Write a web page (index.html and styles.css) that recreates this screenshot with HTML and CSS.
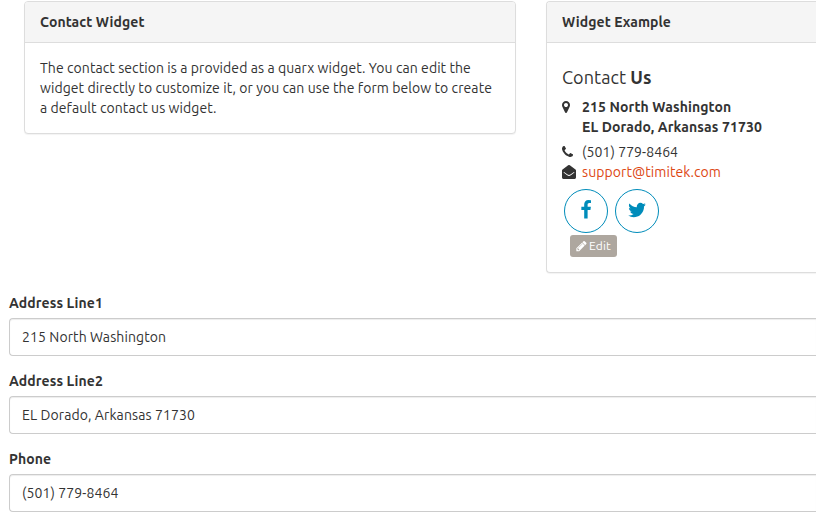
FILE: index.html
```html
<!DOCTYPE html>
<html lang="en">
<head>
<meta charset="utf-8">
<title>Contact Widget</title>
<link rel="stylesheet" href="styles.css">
</head>
<body>
<div class="row">
  <section class="panel panel-info">
    <h3 class="panel-heading">Contact Widget</h3>
    <div class="panel-body">
      <p>The contact section is a provided as a quarx widget. You can edit the<br>widget directly to customize it, or you can use the form below to create<br>a default contact us widget.</p>
    </div>
  </section>
  <section class="panel panel-example">
    <h3 class="panel-heading">Widget Example</h3>
    <div class="panel-body">
      <h4 class="contact-title">Contact <strong>Us</strong></h4>
      <ul class="contact-list">
        <li class="address">
          <svg class="icon" viewBox="384 0 1792 1792"><path d="M1152 640q0-106-75-181t-181-75-181 75-75 181 75 181 181 75 181-75 75-181zm256 0q0 109-33 179l-364 774q-16 33-47.5 52t-67.5 19-67.5-19-46.5-52l-365-774q-33-70-33-179 0-212 150-362t362-150 362 150 150 362z"/></svg>
          <strong>215 North Washington<br>EL Dorado, Arkansas 71730</strong>
        </li>
        <li>
          <svg class="icon" viewBox="192 0 1792 1792"><path d="M1600 1240q0 27-10 70.5t-21 68.5q-21 50-122 106-94 51-186 51-27 0-52.5-3.5t-57.5-12.5-47.5-14.5-55.5-20.5-49-18q-98-35-175-83-128-79-264.5-215.5t-215.5-264.5q-48-77-83-175-3-9-18-49t-20.5-55.5-14.5-47.5-12.5-57.5-3.5-52.5q0-92 51-186 56-101 106-122 25-11 68.5-21t70.5-10q14 0 21 3 18 6 53 76 11 19 30 54t35 63.5 31 53.5q3 4 17.5 25t21.5 35.5 7 28.5q0 20-28.5 50t-62 55-62 53-28.5 46q0 9 5 22.5t8.5 20.5 14 24 11.5 19q76 137 174 235t235 174q2 1 19 11.5t24 14 20.5 8.5 22.5 5q18 0 46-28.5t53-62 55-62 50-28.5q14 0 28.5 7t35.5 21.5 25 17.5q25 15 53.5 31t63.5 35 54 30q70 35 76 53 3 7 3 21z"/></svg>
          <span>(501) 779-8464</span>
        </li>
        <li>
          <svg class="icon icon-mail" viewBox="0 0 14 14"><path fill-rule="evenodd" d="M7 0C7.6 0 8.2 .5 8.8 .9L13.5 4.4Q14 4.8 14 5.4V12.6Q14 14 12.7 14H1.3Q0 14 0 12.6V5.4Q0 4.8 .5 4.4L5.2 .9C5.8 .5 6.4 0 7 0zM2 7L1.5 7.6L5.2 10.3Q7 11.6 8.8 10.3L12.5 7.6L12 7L8.4 9.5Q7 10.4 5.6 9.5z"/></svg>
          <a href="#">support@timitek.com</a>
        </li>
      </ul>
      <div class="social">
        <a href="#" aria-label="Facebook"><svg viewBox="0 0 1792 1792"><path d="M1343 12v264h-157q-86 0-116 36t-30 108v189h293l-39 296h-254v759h-306v-759h-255v-296h255v-218q0-186 104-288.5t277-102.5q147 0 228 12z"/></svg></a>
        <a href="#" aria-label="Twitter"><svg viewBox="0 0 1792 1792"><path d="M1684 408q-67 98-162 167 1 14 1 42 0 130-38 259.5t-115.5 248.5-184.5 210.5-258 146-323 54.5q-271 0-496-145 35 4 78 4 225 0 401-138-105-2-188-64.5t-114-159.5q33 5 61 5 43 0 85-11-112-23-185.5-111.5t-73.5-205.5v-4q68 38 146 41-66-44-105-115t-39-154q0-88 44-163 121 149 294.5 238.5t371.5 99.5q-8-38-8-74 0-134 94.5-228.5t228.5-94.5q140 0 236 102 109-21 205-78-37 115-142 178 93-10 186-50z"/></svg></a>
      </div>
      <a class="edit" href="#"><svg viewBox="128 0 1536 1792"><path d="M491 1536l91-91-235-235-91 91v107h128v128h107zm523-928q0-22-22-22-10 0-17 7l-542 542q-7 7-7 17 0 22 22 22 10 0 17-7l542-542q7-7 7-17zm-54-192l416 416-832 832h-416v-416zm683 96q0 53-37 90l-166 166-416-416 166-165q36-38 90-38 53 0 91 38l235 234q37 39 37 91z"/></svg><span>Edit</span></a>
    </div>
  </section>
</div>
<form class="form">
  <div class="group"><label for="address1">Address Line1</label><input id="address1" value="215 North Washington"></div>
  <div class="group"><label for="address2">Address Line2</label><input id="address2" value="EL Dorado, Arkansas 71730"></div>
  <div class="group"><label for="phone">Phone</label><input id="phone" value="(501) 779-8464"></div>
</form>
</body>
</html>
```
FILE: styles.css
```css
* { box-sizing: border-box; }
body {
  margin: 0;
  padding-top: 1px;
  overflow: hidden;
  background: #fff;
  color: #333;
  font: 14px/20px Ubuntu, "Noto Sans", sans-serif;
  letter-spacing: .075px;
}
a { color: #dd4814; text-decoration: none; }
h3, h4, p, ul { margin: 0; padding: 0; }
.row { display: flex; align-items: flex-start; gap: 30px; padding-left: 24px; }
.panel {
  border: 1px solid #ddd;
  border-radius: 4px;
  background: #fff;
  box-shadow: 0 1px 1px rgba(0, 0, 0, .05);
}
.panel-info { flex: none; width: 492px; height: 133px; }
.panel-example {
  flex: 1;
  height: 272px;
  border-right: 0;
  border-radius: 4px 0 0 4px;
}
.panel-heading {
  height: 41px;
  padding: 10px 15px;
  border-bottom: 1px solid #ddd;
  border-radius: 3px 3px 0 0;
  background: #f5f5f5;
  font-size: 14px;
  font-weight: 700;
}
.panel-example .panel-heading { border-radius: 3px 0 0; }
.panel-body { padding: 15px; white-space: nowrap; }
.contact-title {
  margin: 9px 0 10px;
  font-size: 18px;
  font-weight: 400;
  line-height: 20px;
}
.contact-list { list-style: none; }
.contact-list li { display: flex; gap: 6px; }
.contact-list .address { margin-bottom: 5px; }
strong, label { letter-spacing: .11px; }
.icon { flex: none; width: 14px; height: 14px; margin-top: 3px; fill: #333; }
.social { display: flex; gap: 7px; margin: 7px 0 0 2px; }
.social a {
  display: flex;
  align-items: center;
  justify-content: center;
  width: 44px;
  height: 44px;
  border: 1px solid #008cba;
  border-radius: 50%;
}
.social svg { width: 20px; height: 20px; margin-top: -2px; fill: #008cba; }
.edit {
  display: flex;
  align-items: center;
  gap: 2px;
  width: 47px;
  height: 22px;
  margin: 2px 0 0 8px;
  padding-left: 6px;
  border-radius: 3px;
  background: #aea79f;
  color: #fff;
  font-size: 12px;
  line-height: 18px;
}
.edit svg { width: 11px; height: 12px; fill: #fff; }
.edit span { letter-spacing: .15px; }
.form { padding: 20px 0 0 9px; }
.group { margin-bottom: 15px; }
label { display: block; margin-bottom: 5px; font-weight: 700; }
input {
  display: block;
  width: 100%;
  height: 38px;
  padding: 8px 12px;
  border: 1px solid #ccc;
  border-right: 0;
  border-radius: 4px 0 0 4px;
  background: #fff;
  box-shadow: inset 0 1px 1px rgba(0, 0, 0, .075);
  color: #333;
  font: inherit;
  letter-spacing: .1px;
}
```
